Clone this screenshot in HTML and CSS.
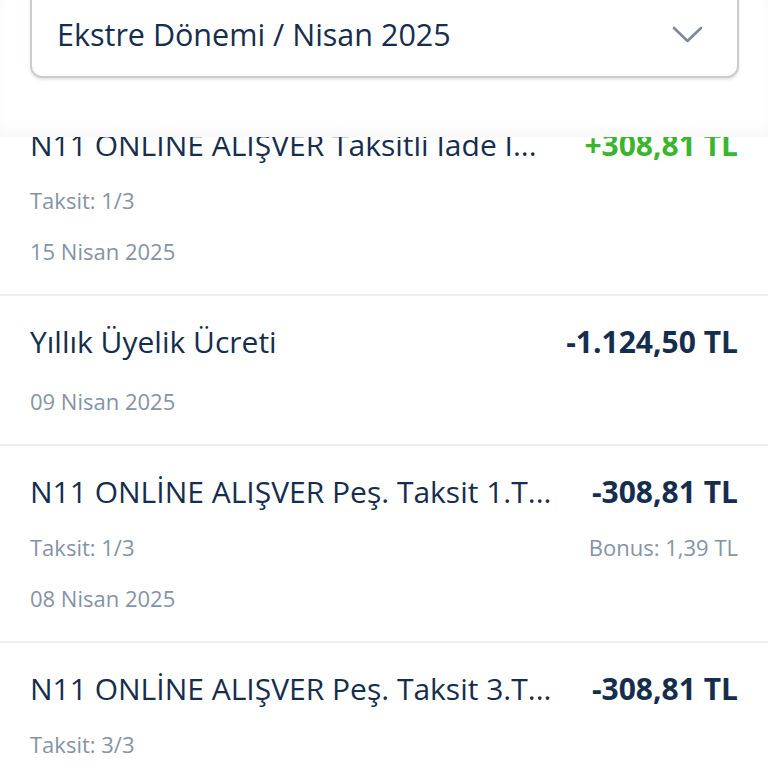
FILE: index.html
```html
<!DOCTYPE html>
<html lang="tr">
<head>
    <meta charset="utf-8">
    <title>Ekstre Dönemi</title>
    <meta name="viewport" content="width=device-width, initial-scale=1">
    <link rel="stylesheet" href="styles.css">
</head>
<body>
    <div class="page">
        <div class="header">
            <div class="period-select">
                <span class="period-label">Ekstre Dönemi / Nisan 2025</span>
                <svg class="chevron" width="31" height="17" viewBox="0 0 31 17">
                    <path d="M2 2 L15.5 15 L29 2" fill="none" stroke="#7e8898" stroke-width="2.6" stroke-linecap="round" stroke-linejoin="round"/>
                </svg>
            </div>
        </div>

        <div class="list-viewport">
            <div class="list">
                <div class="tx">
                    <div class="tx-line">
                        <span class="tx-title">N11 ONLİNE ALIŞVER Taksitli İade İ...</span>
                        <span class="tx-amount plus">+308,81 TL</span>
                    </div>
                    <div class="tx-line sub">
                        <span>Taksit: 1/3</span>
                    </div>
                    <div class="tx-line sub date">
                        <span>15 Nisan 2025</span>
                    </div>
                </div>

                <div class="tx">
                    <div class="tx-line">
                        <span class="tx-title">Yıllık Üyelik Ücreti</span>
                        <span class="tx-amount">-1.124,50 TL</span>
                    </div>
                    <div class="tx-line sub solo">
                        <span>09 Nisan 2025</span>
                    </div>
                </div>

                <div class="tx">
                    <div class="tx-line">
                        <span class="tx-title">N11 ONLİNE ALIŞVER Peş. Taksit 1.T...</span>
                        <span class="tx-amount">-308,81 TL</span>
                    </div>
                    <div class="tx-line sub">
                        <span>Taksit: 1/3</span>
                        <span>Bonus: 1,39 TL</span>
                    </div>
                    <div class="tx-line sub date">
                        <span>08 Nisan 2025</span>
                    </div>
                </div>

                <div class="tx">
                    <div class="tx-line">
                        <span class="tx-title">N11 ONLİNE ALIŞVER Peş. Taksit 3.T...</span>
                        <span class="tx-amount">-308,81 TL</span>
                    </div>
                    <div class="tx-line sub">
                        <span>Taksit: 3/3</span>
                    </div>
                    <div class="tx-line sub date">
                        <span>01 Nisan 2025</span>
                    </div>
                </div>
            </div>
        </div>
    </div>
</body>
</html>
```

FILE: styles.css
```css
body {
    margin: 0;
    background-color: #ffffff;
    font-family: "Open Sans", "Noto Sans", sans-serif;
    color: #162e4e;
}

.page {
    width: 768px;
    height: 768px;
    overflow: hidden;
    display: flex;
    flex-direction: column;
}

.header {
    position: relative;
    z-index: 2;
    flex: none;
    height: 137px;
    background-color: #ffffff;
    padding: 0 29px 0 30px;
    box-shadow: 0 -6px 10px rgba(0, 0, 0, 0.03) inset;
}

.period-select {
    margin-top: -22px;
    height: 100px;
    border: 2px solid #c9ccd1;
    border-radius: 12px;
    box-shadow: 0 2px 3px rgba(0, 0, 0, 0.10);
    display: flex;
    align-items: center;
    justify-content: space-between;
    padding: 12px 34px 0 25px;
    box-sizing: border-box;
    background-color: #ffffff;
}

.period-label {
    font-size: 30.5px;
    color: #162e4e;
}

.chevron {
    display: block;
}

.list-viewport {
    flex: 1;
    overflow: hidden;
}

.list {
    margin-top: -38px;
}

.tx {
    padding: 26px 30px 28px;
    border-bottom: 2px solid #eceef1;
}

.tx-line {
    display: flex;
    justify-content: space-between;
    align-items: center;
    gap: 30px;
    line-height: 40px;
}

.tx-title {
    font-size: 30px;
    white-space: nowrap;
    overflow: hidden;
    text-overflow: ellipsis;
}

.tx-amount {
    font-size: 30px;
    font-weight: 700;
    white-space: nowrap;
}

.tx-amount.plus {
    color: #3bb52d;
}

.sub {
    margin-top: 20px;
    font-size: 22px;
    line-height: 30px;
    color: #8593a6;
}

.sub.date {
    margin-top: 21px;
}

.sub.solo {
    margin-top: 24px;
}
```
